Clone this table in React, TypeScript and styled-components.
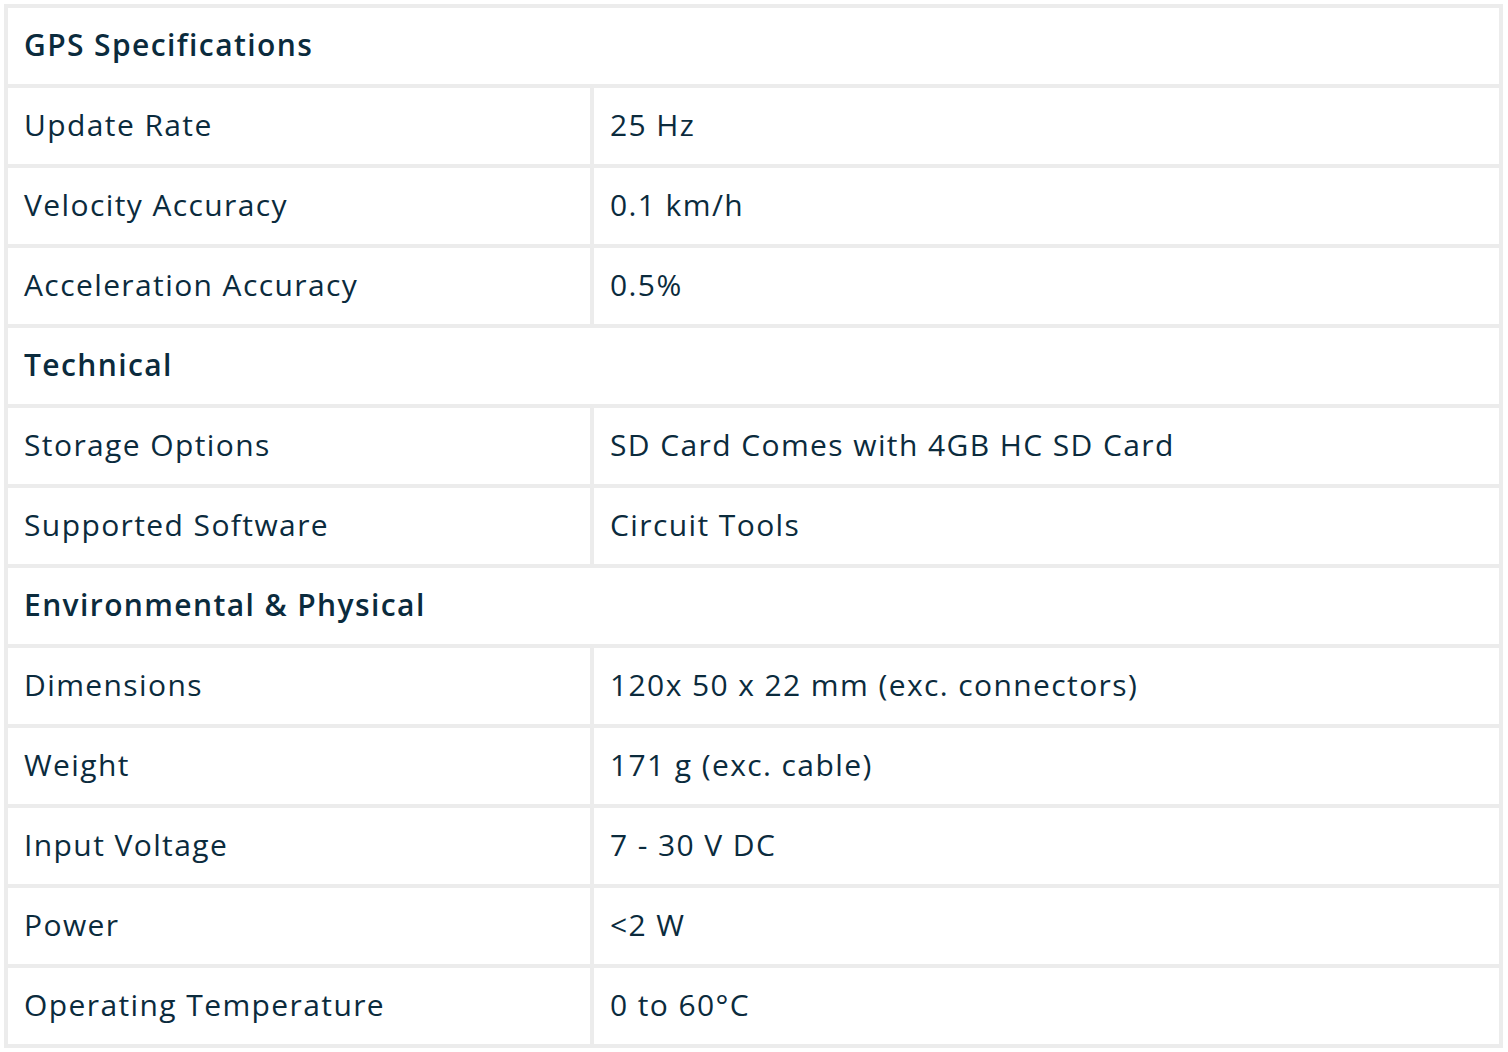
import React from "react";
import styled, { createGlobalStyle } from "styled-components";

type Row = { label: string; value?: string; heading?: boolean };

const rows: Row[] = [
  { label: "GPS Specifications", heading: true },
  { label: "Update Rate", value: "25 Hz" },
  { label: "Velocity Accuracy", value: "0.1 km/h" },
  { label: "Acceleration Accuracy", value: "0.5%" },
  { label: "Technical", heading: true },
  { label: "Storage Options", value: "SD Card Comes with 4GB HC SD Card" },
  { label: "Supported Software", value: "Circuit Tools" },
  { label: "Environmental & Physical", heading: true },
  { label: "Dimensions", value: "120x 50 x 22 mm (exc. connectors)" },
  { label: "Weight", value: "171 g (exc. cable)" },
  { label: "Input Voltage", value: "7 - 30 V DC" },
  { label: "Power", value: "<2 W" },
  { label: "Operating Temperature", value: "0 to 60°C" },
];

const GlobalStyle = createGlobalStyle`
  html, body {
    margin: 0;
    padding: 0;
    background: #ffffff;
  }
  body {
    font-family: "Open Sans", Lato, sans-serif;
    color: #0b2b3d;
  }
`;

const Wrapper = styled.div`
  padding: 4px;
`;

const SpecTable = styled.table`
  width: 1499px;
  border-collapse: separate;
  border-spacing: 0;
  border-top: 4px solid #ececec;
  border-left: 4px solid #ececec;
  table-layout: fixed;
`;

const Cell = styled.td<{ $heading?: boolean }>`
  height: 80px;
  padding: 0 16px 2px;
  box-sizing: border-box;
  border-right: 4px solid #ececec;
  border-bottom: 4px solid #ececec;
  font-size: 30px;
  letter-spacing: 1.4px;
  font-weight: ${(p) => (p.$heading ? 600 : 400)};
  line-height: 1;
  vertical-align: middle;
  white-space: nowrap;
  color: #0b2b3d;
`;

const LabelCol = styled.col`
  width: 586px;
`;

export default function App() {
  return (
    <Wrapper>
      <GlobalStyle />
      <SpecTable>
        <colgroup>
          <LabelCol />
          <col />
        </colgroup>
        <tbody>
          {rows.map((r) =>
            r.heading ? (
              <tr key={r.label}>
                <Cell $heading colSpan={2}>
                  {r.label}
                </Cell>
              </tr>
            ) : (
              <tr key={r.label}>
                <Cell>{r.label}</Cell>
                <Cell>{r.value}</Cell>
              </tr>
            )
          )}
        </tbody>
      </SpecTable>
    </Wrapper>
  );
}
